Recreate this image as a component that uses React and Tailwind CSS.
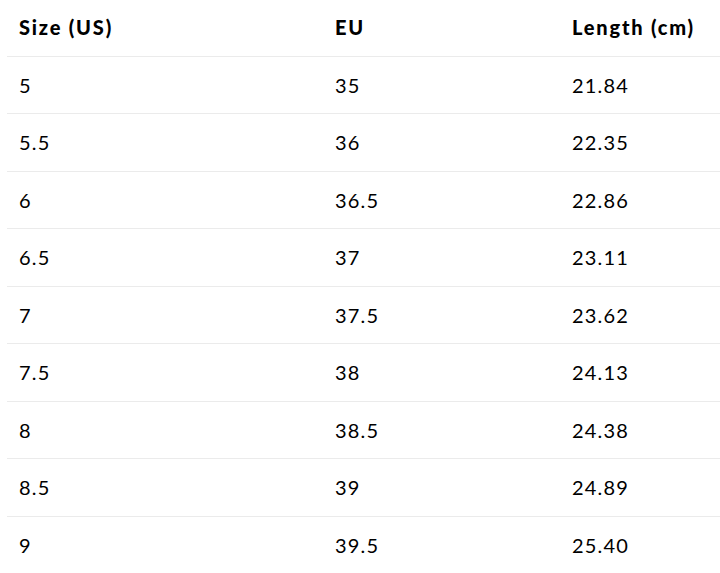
import React from 'react'

const rows = [
  ['5', '35', '21.84'],
  ['5.5', '36', '22.35'],
  ['6', '36.5', '22.86'],
  ['6.5', '37', '23.11'],
  ['7', '37.5', '23.62'],
  ['7.5', '38', '24.13'],
  ['8', '38.5', '24.38'],
  ['8.5', '39', '24.89'],
  ['9', '39.5', '25.40'],
]

export default function App() {
  return (
    <div className="bg-white w-[720px] h-[573px] overflow-hidden pl-[7px] text-black font-['Lato',sans-serif]">
      <div className="grid grid-cols-[316px_237px_1fr] h-[56.5px] items-center border-b border-[#ebebeb] text-[20px] font-black tracking-[0.09em] pb-[2px]">
        <div className="pl-3">Size (US)</div>
        <div className="pl-3">EU</div>
        <div className="pl-3">Length (cm)</div>
      </div>
      {rows.map((r, i) => (
        <div
          key={i}
          className="grid grid-cols-[316px_237px_1fr] h-[57.5px] items-center border-b border-[#ebebeb] text-[20px] tracking-[0.06em]"
        >
          {r.map((c, j) => (
            <div key={j} className="pl-3">{c}</div>
          ))}
        </div>
      ))}
    </div>
  )
}
